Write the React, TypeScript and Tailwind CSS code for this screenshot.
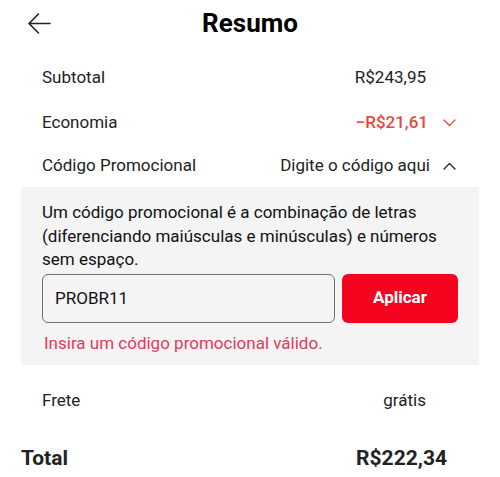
import { useState } from "react";

function Chevron({ up }: { up?: boolean }) {
  return (
    <svg width="13" height="8" viewBox="0 0 13 8" fill="none" className="shrink-0">
      <path
        d={up ? "M1 7L6.5 1.5L12 7" : "M1 1L6.5 6.5L12 1"}
        stroke="currentColor"
        strokeWidth="1.3"
        strokeLinecap="round"
        strokeLinejoin="round"
      />
    </svg>
  );
}

export default function App() {
  const [code, setCode] = useState("PROBR11");

  return (
    <div
      className="w-[500px] h-[477px] bg-white text-[#222] overflow-hidden"
      style={{ fontFamily: "Roboto, 'Noto Sans', sans-serif" }}
    >
      {/* Header */}
      <header className="relative h-[45px] flex items-center justify-center">
        <button type="button" className="absolute left-[28px] top-[13px] text-[#222]" aria-label="Voltar">
          <svg width="23" height="21" viewBox="0 0 23 21" fill="none">
            <path d="M22 10.5H1.5M10.5 1L1 10.5L10.5 20" stroke="currentColor" strokeWidth="1.6" strokeLinecap="round" strokeLinejoin="round" />
          </svg>
        </button>
        <h1 className="text-[26px] font-bold text-black leading-none">Resumo</h1>
      </header>

      {/* Rows */}
      <div className="pt-[10px] text-[17px]">
        <div className="h-[45px] flex items-center justify-between pl-[42px] pr-[74px]">
          <span>Subtotal</span>
          <span>R$243,95</span>
        </div>
        <div className="h-[45px] flex items-center justify-between pl-[42px] pr-[44px]">
          <span>Economia</span>
          <span className="flex items-center gap-[15px] text-[#e8473c]">
            <span className="font-medium">−R$21,61</span>
            <Chevron />
          </span>
        </div>
        <div className="h-[42px] flex items-center justify-between pl-[42px] pr-[44px]">
          <span>Código Promocional</span>
          <span className="flex items-center gap-[13px]">
            <span>Digite o código aqui</span>
            <Chevron up />
          </span>
        </div>
      </div>

      {/* Promo panel */}
      <div className="mx-[21px] bg-[#f4f4f4] px-[21px] pt-[14px] pb-[10px]">
        <p className="text-[17px] leading-[23.5px] text-[#111]">
          Um código promocional é a combinação de letras (diferenciando maiúsculas e minúsculas) e números sem espaço.
        </p>
        <div className="mt-[2px] flex gap-[7px]">
          <input
            value={code}
            onChange={(e) => setCode(e.target.value)}
            className="w-[293px] h-[49px] rounded-[6px] border border-[#6f6f6f] bg-[#f4f4f4] px-[12px] text-[17px] text-[#111] outline-none"
          />
          <button
            type="button"
            className="flex-1 h-[49px] rounded-[6px] bg-[#f6041f] text-white text-[17px] font-bold"
          >
            Aplicar
          </button>
        </div>
        <p className="mt-[9px] pl-[2px] text-[17px] leading-[23.5px] text-[#e23a5e]">
          Insira um código promocional válido.
        </p>
      </div>

      {/* Frete */}
      <div className="h-[72px] flex items-center justify-between pl-[42px] pr-[74px] text-[17px]">
        <span>Frete</span>
        <span>grátis</span>
      </div>

      {/* Total */}
      <div className="h-[44px] flex items-center justify-between pl-[21px] pr-[53px] text-[21px] font-bold">
        <span>Total</span>
        <span>R$222,34</span>
      </div>
    </div>
  );
}
